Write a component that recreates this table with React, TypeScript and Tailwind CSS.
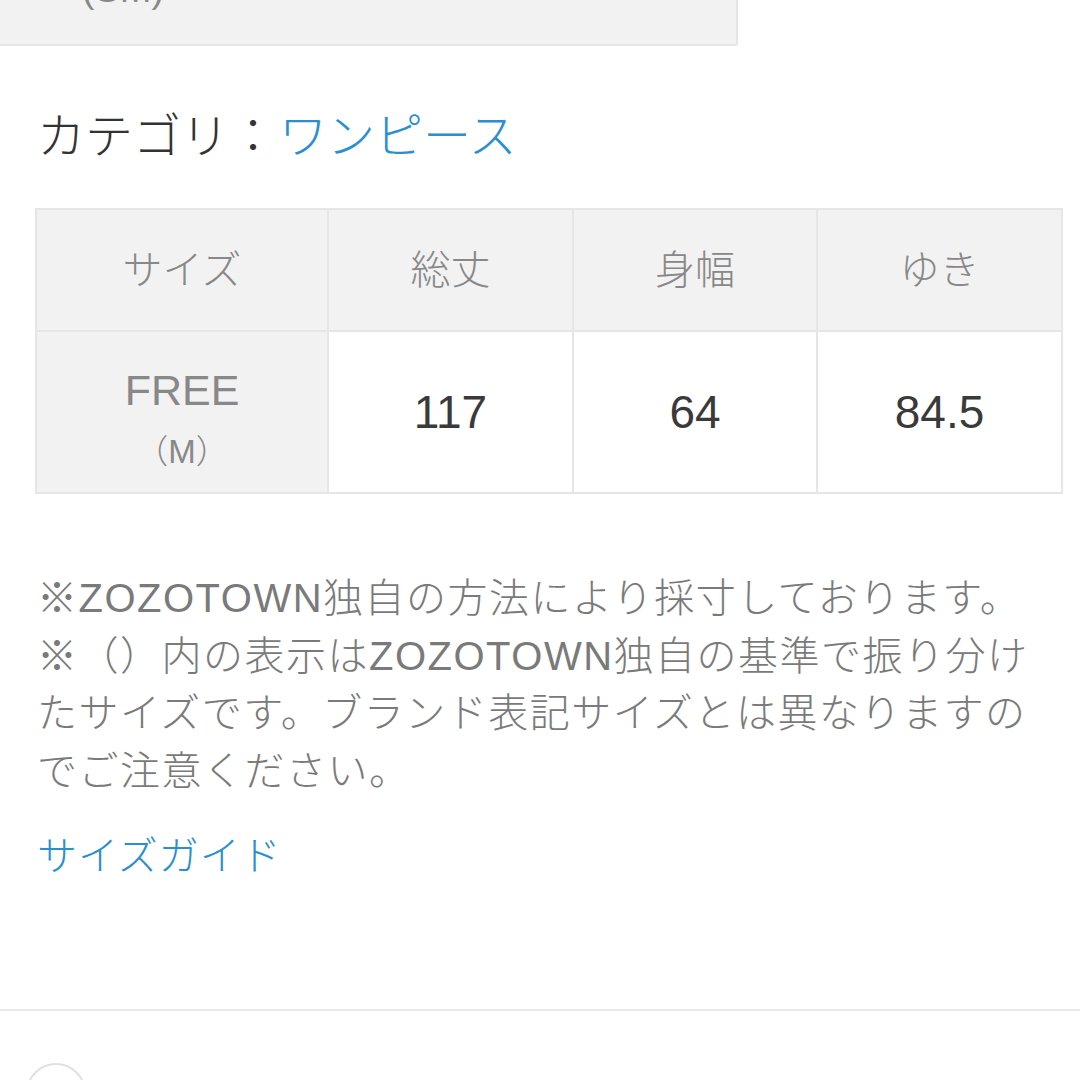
const font = { fontFamily: '"Liberation Sans", "Noto Sans CJK JP", sans-serif' };

const headers = ["サイズ", "総丈", "身幅", "ゆき"];
const values = ["117", "64", "84.5"];

const notes = [
  "※ZOZOTOWN独自の方法により採寸しております。",
  "※（）内の表示はZOZOTOWN独自の基準で振り分け",
  "たサイズです。ブランド表記サイズとは異なりますの",
  "でご注意ください。",
];

export default function App() {
  return (
    <div className="w-[1080px] h-[1080px] bg-white overflow-hidden font-light" style={font}>
      {/* previous block, cut off at the top */}
      <div className="w-[738px] h-[46px] bg-[#f2f2f2] border-b-2 border-r-2 border-[#e6e6e6] rounded-br-[3px] overflow-hidden">
        <div className="w-[246px] text-center text-[38px] leading-[38px] -mt-[30px] text-[#888]">(SM)</div>
      </div>

      <div className="pl-[37px] pt-[61px] text-[48px] leading-[60px] text-[#333] whitespace-nowrap">
        カテゴリ：<span className="ml-[2px] text-[#2a8fd1]">ワンピース</span>
      </div>

      {/* size table */}
      <div className="ml-[35px] mt-[41px] w-[1028px] grid grid-cols-[290px_243px_242px_243px] gap-[2px] p-[2px] bg-[#e6e6e6]">
        {headers.map((h) => (
          <div key={h} className="h-[120px] bg-[#f2f2f2] flex items-center justify-center text-[40px] text-[#888]">
            {h}
          </div>
        ))}
        <div className="h-[160px] pt-[18px] bg-[#f2f2f2] flex flex-col items-center justify-center text-[#888]">
          <span className="text-[43px] leading-[50px]">FREE</span>
          <span className="mt-[12px] text-[33px] leading-[50px]">（M）</span>
        </div>
        {values.map((v) => (
          <div key={v} className="h-[160px] bg-white flex items-center justify-center text-[46px] text-[#3a3a3a]">
            {v}
          </div>
        ))}
      </div>

      <div className="pl-[37px] mt-[76px] text-[40px] leading-[57.5px] tracking-[1.5px] text-[#7a7a7a] whitespace-nowrap">
        {notes.map((n) => (
          <div key={n}>{n}</div>
        ))}
      </div>

      <div className="pl-[37px] mt-[26px] text-[40px] leading-[60px] tracking-[1px] text-[#2a8fd1]">サイズガイド</div>

      <div className="mt-[123px] h-[2px] bg-[#e8e8e8]" />

      <div className="ml-[26px] mt-[52px] w-[60px] h-[60px] rounded-full border-2 border-[#e0e0e0]" />
    </div>
  );
}
